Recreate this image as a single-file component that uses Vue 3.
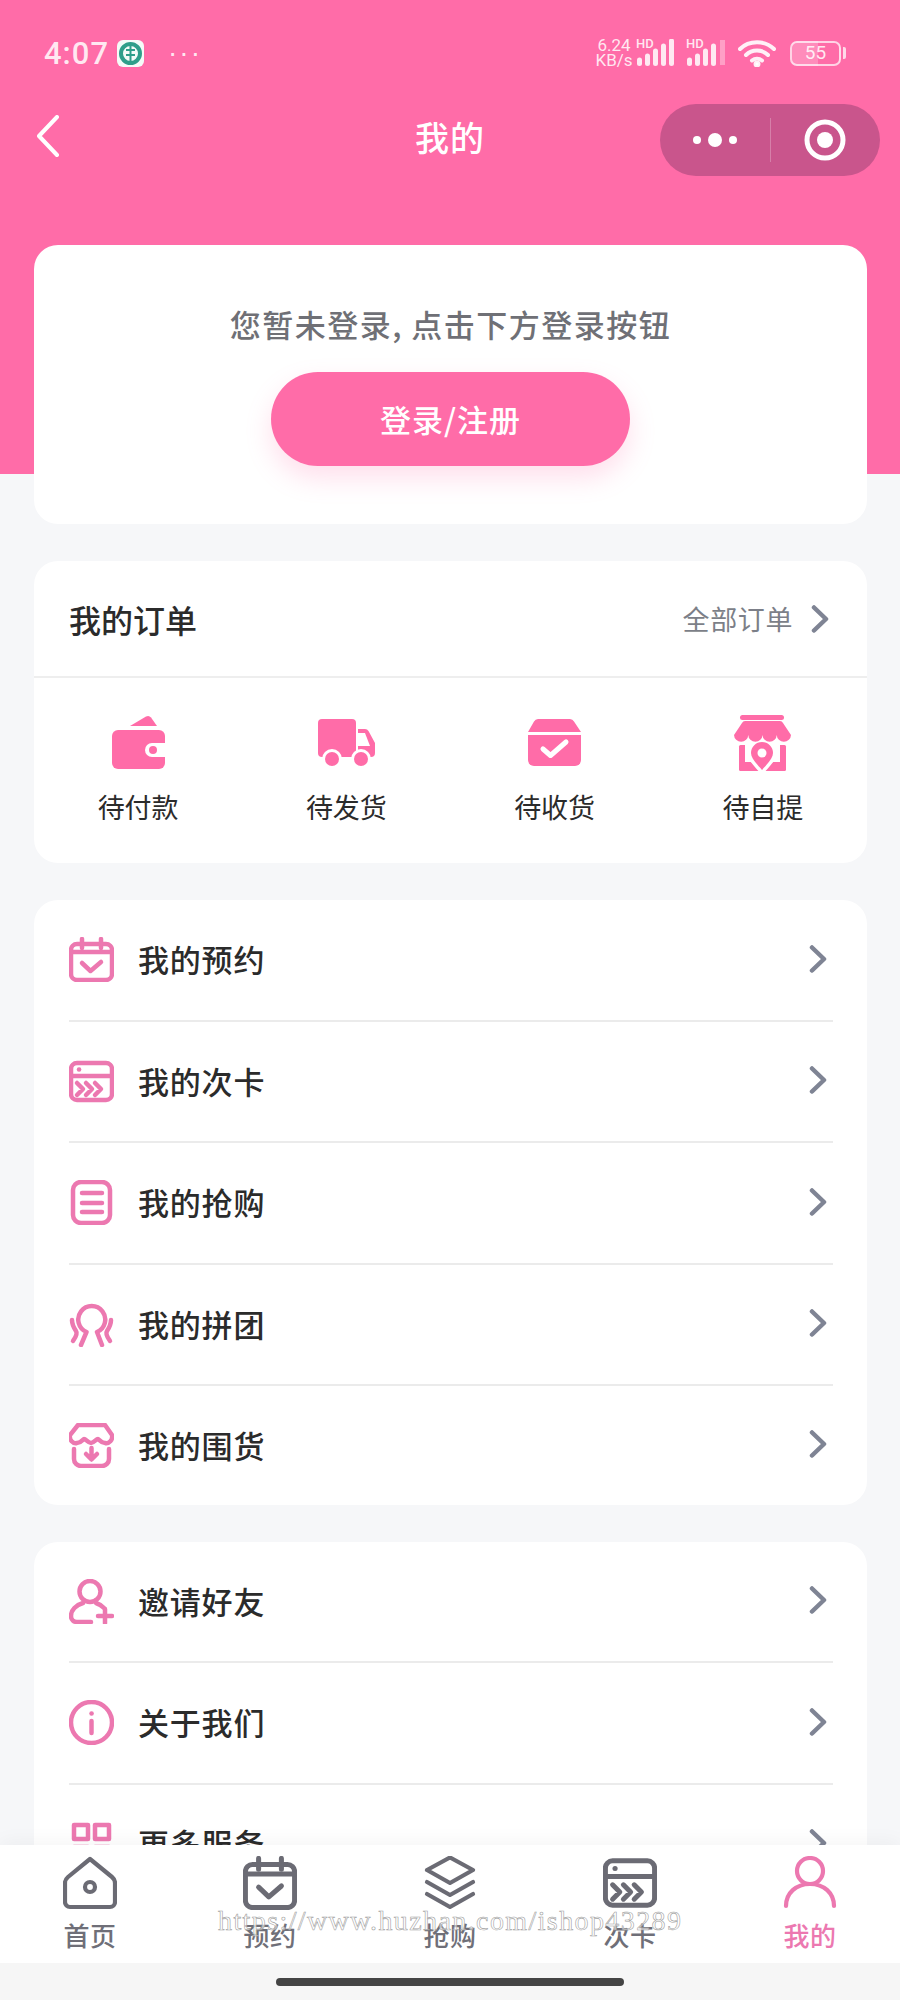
<template>
  <div class="page">
    <div class="scroll">
      <div class="status">
        <div class="status-left">
          <span class="time">4:07</span>
          <svg class="bank" width="27" height="27" viewBox="0 0 27 27">
            <rect width="27" height="27" rx="6" fill="#f4fbf8" />
            <circle cx="13.5" cy="13.5" r="9.5" fill="none" stroke="#2f9e8a" stroke-width="4" />
            <path d="M9 10h9M9 15h9M13.5 6v15" fill="none" stroke="#2f9e8a" stroke-width="2" />
          </svg>
          <span class="more-dots">···</span>
        </div>
        <div class="status-right">
          <span class="net">6.24<br />KB/s</span>
          <span class="signal">
            <span class="hd">HD</span>
            <svg width="39" height="27" viewBox="0 0 39 27">
              <path d="M2.500 21v3.500M10.500 17v7.500M18.500 12v12.500M26.500 7v17.500M34.500 2v22.500" stroke="#fff" stroke-opacity=".85" stroke-width="5" stroke-linecap="round" />
            </svg>
          </span>
          <span class="signal">
            <span class="hd">HD</span>
            <svg width="39" height="27" viewBox="0 0 39 27">
              <path d="M2.500 21v3.500M10.500 17v7.500M18.500 12v12.500M26.500 7v17.500" stroke="#fff" stroke-opacity=".85" stroke-width="5" stroke-linecap="round" />
              <path d="M35.500 1v25" stroke="#fff" stroke-opacity=".35" stroke-width="5" />
            </svg>
          </span>
          <svg class="wifi" width="38" height="28" viewBox="0 0 38 28" fill="none" stroke="#fff" stroke-opacity=".9" stroke-width="4" stroke-linecap="round">
            <path d="M2 10C11 1 27 1 36 10" />
            <path d="M8 16C14 10 24 10 30 16" />
            <path d="M14 21.500C17 19 21 19 24 21.500" />
            <circle cx="19" cy="25" r="1.500" fill="#fff" />
          </svg>
          <span class="battery"><span class="battery-body">55</span><span class="battery-tip"></span></span>
        </div>
      </div>

      <div class="nav">
        <svg class="back" width="24" height="42" viewBox="0 0 24 42" fill="none" stroke="#fff" stroke-width="4" stroke-linecap="round" stroke-linejoin="round">
          <path d="M21 2L3 21l18 19" />
        </svg>
        <div class="nav-title">我的</div>
        <div class="capsule">
          <div class="capsule-side">
            <svg width="46" height="16" viewBox="0 0 46 16" fill="#fff">
              <circle cx="5" cy="8" r="4" />
              <circle cx="23" cy="8" r="7" />
              <circle cx="41" cy="8" r="4" />
            </svg>
          </div>
          <div class="capsule-line"></div>
          <div class="capsule-side">
            <svg width="42" height="42" viewBox="0 0 42 42">
              <circle cx="21" cy="21" r="18" fill="none" stroke="#fff" stroke-width="5" />
              <circle cx="21" cy="21" r="8" fill="#fff" />
            </svg>
          </div>
        </div>
      </div>

      <div class="cards">
        <section class="card login">
          <p class="login-tip">您暂未登录, 点击下方登录按钮</p>
          <button class="login-btn">登录/注册</button>
        </section>

        <section class="card">
          <div class="order-head">
            <span class="order-title">我的订单</span>
            <span class="order-all">
              全部订单
              <svg class="arrow" width="18" height="28" viewBox="0 0 18 28"><path d="M3 2.500L15 14 3 25.500" /></svg>
            </span>
          </div>
          <div class="order-row">
            <div class="order-item">
              <svg class="order-icon" width="60" height="60" viewBox="0 0 60 60">
                <path d="M22 11L38 1.500Q41 0 43 2.500L49 11z" fill="#ff6ca8" />
                <path d="M10 15h41a6 6 0 0 1 6 6v27a6 6 0 0 1-6 6H10a6 6 0 0 1-6-6V21a6 6 0 0 1 6-6z" fill="#ff6ca8" />
                <path d="M58 28H44a7 7 0 0 0 0 14h14z" fill="#fff" />
                <circle cx="45" cy="35" r="4" fill="#ff6ca8" />
              </svg>
              <span>待付款</span>
            </div>
            <div class="order-item">
              <svg class="order-icon" width="60" height="60" viewBox="0 0 60 60">
                <path d="M6 4h30a4 4 0 0 1 4 4v34H6a4 4 0 0 1-4-4V8a4 4 0 0 1 4-4z" fill="#ff6ca8" />
                <path d="M42 14h7a4 4 0 0 1 3.500 2L59 28v10a4 4 0 0 1-4 4H42z" fill="#ff6ca8" />
                <path d="M41 18h8l5 13H41z" fill="#fff" />
                <circle cx="16" cy="44" r="10" fill="#fff" />
                <circle cx="45" cy="44" r="10" fill="#fff" />
                <circle cx="16" cy="44" r="7" fill="#ff6ca8" />
                <circle cx="45" cy="44" r="7" fill="#ff6ca8" />
              </svg>
              <span>待发货</span>
            </div>
            <div class="order-item">
              <svg class="order-icon" width="60" height="60" viewBox="0 0 60 60">
                <path d="M13 4h32a5 5 0 0 1 4 2.500L56 17H3L9 6.500A5 5 0 0 1 13 4z" fill="#ff6ca8" />
                <path d="M3 20h53v25a6 6 0 0 1-6 6H9a6 6 0 0 1-6-6z" fill="#ff6ca8" />
                <path d="M18 34l7.500 6.500L41 27" fill="none" stroke="#fff" stroke-width="5" stroke-linecap="round" stroke-linejoin="round" />
              </svg>
              <span>待收货</span>
            </div>
            <div class="order-item">
              <svg class="order-icon" width="60" height="60" viewBox="0 0 60 60">
                <rect x="7" y="0" width="44" height="5" rx="2.500" fill="#ff6ca8" />
                <rect x="6" y="30" width="47" height="26" rx="1.500" fill="#ff6ca8" />
                <rect x="12" y="29" width="35" height="18" fill="#fff" />
                <path d="M29 26a14 14 0 0 1 14 14c0 6-9 14-14 20-5-6-14-14-14-20a14 14 0 0 1 14-14z" fill="#fff" />
                <path d="M29 27a11 11 0 0 1 11 11c0 6-7 12-11 17-4-5-11-11-11-17a11 11 0 0 1 11-11z" fill="#ff6ca8" />
                <circle cx="29" cy="38" r="4.500" fill="#fff" />
                <path d="M12 6h35a4 4 0 0 1 3 2l8 12a7.130 7.130 0 0 1-14.250 0a7.130 7.130 0 0 1-14.250 0a7.130 7.130 0 0 1-14.250 0a7.130 7.130 0 0 1-14.250 0L9 8a4 4 0 0 1 3-2z" fill="#ff6ca8" />
              </svg>
              <span>待自提</span>
            </div>
          </div>
        </section>

        <section v-for="(group, i) in groups" :key="i" class="card list">
          <div v-for="row in group" :key="row.label" class="list-row">
            <svg class="list-icon" width="45" height="45" viewBox="0 0 45 45">
              <path v-for="d in row.paths" :key="d" :d="d" />
            </svg>
            <span class="list-label">{{ row.label }}</span>
            <svg class="arrow" width="18" height="28" viewBox="0 0 18 28"><path d="M3 2.500L15 14 3 25.500" /></svg>
          </div>
        </section>
      </div>
    </div>

    <nav class="tabbar">
      <div v-for="tab in tabs" :key="tab.label" class="tab" :class="{ active: tab.active }">
        <svg class="tab-icon" width="54" height="54" :viewBox="tab.box">
          <path v-for="d in tab.paths" :key="d" :d="d" />
        </svg>
        <span>{{ tab.label }}</span>
      </div>
    </nav>
    <div class="home-area"><div class="home-bar"></div></div>

    <div class="watermark">https://www.huzhan.com/ishop43289</div>
  </div>
</template>

<script setup>
const calendar = [
  "M8 7h29a6 6 0 0 1 6 6v24a6 6 0 0 1-6 6H8a6 6 0 0 1-6-6V13a6 6 0 0 1 6-6z",
  "M2 15h41",
  "M13 2v9M32 2v9",
  "M13 26l8.500 8L32 25",
];
const timesCard = [
  "M8 4h29a6 6 0 0 1 6 6v25a6 6 0 0 1-6 6H8a6 6 0 0 1-6-6V10a6 6 0 0 1 6-6z",
  "M2 17h41",
  "M10 10.500h.1",
  "M8 24l6 6-6 6M17 24l6 6-6 6M26 24l6 6-6 6",
];

const groups = [
  [
    { label: "我的预约", paths: calendar },
    { label: "我的次卡", paths: timesCard },
    {
      label: "我的抢购",
      paths: [
        "M12 2h21a8 8 0 0 1 8 8v25a8 8 0 0 1-8 8H12a8 8 0 0 1-8-8V10a8 8 0 0 1 8-8z",
        "M13 13h20M13 23h20M13 32h20",
      ],
    },
    {
      label: "我的拼团",
      paths: [
        "M12 43l5.500-13A13.500 13.500 0 1 1 28 30l5 13",
        "M3 18c0 5 2 8 4 11s-1 7-3 10",
        "M42 18c0 5-2 8-4 11s1 7 3 10",
      ],
    },
    {
      label: "我的围货",
      paths: [
        "M9 2h27l7 10c1 5-3 9-7 8-4 0-6-4-7-4-2 0-4 4-7 4s-5-4-7-4c-1 0-3 4-7 4-4 1-8-3-7-8z",
        "M5 26v10a7 7 0 0 0 7 7h21a7 7 0 0 0 7-7V26",
        "M22.500 25v11M17 31l5.500 5.500L28 31",
      ],
    },
  ],
  [
    {
      label: "邀请好友",
      paths: [
        "M21 2a10.500 10.500 0 1 0 0 21a10.500 10.500 0 1 0 0-21z",
        "M14 24C7 26 2 31 2 37c0 4 3 6 6 6h14",
        "M27 24c3 1 6 3 8 5",
        "M36 30v14M29 37h14",
      ],
    },
    {
      label: "关于我们",
      paths: [
        "M22.500 2a20.500 20.500 0 1 0 0 41a20.500 20.500 0 1 0 0-41z",
        "M22.500 13.500h.1",
        "M22.500 21v12",
      ],
    },
    {
      label: "更多服务",
      paths: [
        "M5 4h14v14H5zM26 4h14v14H26z",
        "M5 26h14v14H5zM26 26h14v14H26z",
      ],
    },
  ],
];

const tabs = [
  {
    label: "首页",
    box: "0 0 54 54",
    paths: [
      "M27 3L49 21q3 2.500 3 6v19a5 5 0 0 1-5 5H7a5 5 0 0 1-5-5V27q0-3.500 3-6z",
      "M27 26a5 5 0 1 0 0 10a5 5 0 1 0 0-10z",
    ],
  },
  { label: "预约", box: "0 0 45 45", paths: calendar },
  {
    label: "抢购",
    box: "0 0 54 54",
    paths: [
      "M27 1.500L50 14 27 27 4 14z",
      "M50 26L27 39 4 26",
      "M50 38L27 51 4 38",
    ],
  },
  { label: "次卡", box: "0 0 45 45", paths: timesCard },
  {
    label: "我的",
    box: "0 0 54 54",
    active: true,
    paths: [
      "M27 2a13 13 0 1 0 0 26a13 13 0 1 0 0-26z",
      "M3 50C3 37 13 28 27 28s24 9 24 22",
    ],
  },
];
</script>

<style scoped>
.page {
  position: relative;
  width: 900px;
  height: 2000px;
  display: flex;
  flex-direction: column;
  overflow: hidden;
  font-family: "Noto Sans CJK SC", "Noto Sans", sans-serif;
  color: #2b2b2b;
}

.scroll {
  flex: 1;
  min-height: 0;
  overflow: hidden;
  background: linear-gradient(#ff6ca8 474px, #f6f7f9 474px);
}

.status {
  height: 104px;
  padding: 38px 54px 0 44px;
  box-sizing: border-box;
  display: flex;
  justify-content: space-between;
  align-items: flex-start;
  color: rgba(255, 255, 255, 0.85);
}

.status-left {
  display: flex;
  align-items: center;
  gap: 8px;
  height: 30px;
}

.time {
  font-family: Roboto, sans-serif;
  font-size: 31px;
  letter-spacing: 1px;
  font-weight: 500;
  width: 65px;
}

.more-dots {
  margin-left: 16px;
  font-family: "Liberation Sans", sans-serif;
  font-size: 28px;
  letter-spacing: 2px;
}

.status-right {
  display: flex;
  align-items: center;
  height: 30px;
}

.net {
  width: 44px;
  font-family: Roboto, sans-serif;
  font-size: 17px;
  line-height: 15px;
  text-align: center;
}

.signal {
  position: relative;
  width: 50px;
  height: 28px;
  display: flex;
  justify-content: flex-end;
  padding-right: 10px;
  box-sizing: border-box;
}

.hd {
  position: absolute;
  left: 0;
  top: -1px;
  font-family: Roboto, sans-serif;
  font-size: 13px;
  line-height: 12px;
  font-weight: 500;
}

.wifi {
  margin-left: 2px;
}

.battery {
  display: flex;
  align-items: center;
  margin-left: 14px;
}

.battery-body {
  width: 51px;
  height: 25px;
  box-sizing: border-box;
  border: 2.500px solid rgba(255, 255, 255, 0.7);
  border-radius: 7px;
  background: linear-gradient(90deg, rgba(255, 255, 255, 0.22) 55%, transparent 55%);
  font-family: Roboto, sans-serif;
  font-size: 19px;
  line-height: 20px;
  text-align: center;
}

.battery-tip {
  width: 3px;
  height: 12px;
  margin-left: 2px;
  border-radius: 0 2px 2px 0;
  background: rgba(255, 255, 255, 0.75);
}

.nav {
  height: 72px;
  padding: 0 20px;
  display: grid;
  grid-template-columns: 1fr auto 1fr;
  align-items: center;
}

.back {
  margin: -8px 0 0 16px;
}

.nav-title {
  color: #fff;
  font-size: 34px;
  letter-spacing: 1px;
  font-weight: 500;
  margin-top: -8px;
}

.capsule {
  justify-self: end;
  width: 220px;
  height: 72px;
  border-radius: 36px;
  background: #c9558c;
  display: flex;
  align-items: center;
}

.capsule-side {
  flex: 1;
  display: flex;
  justify-content: center;
  align-items: center;
}

.capsule-line {
  width: 1px;
  height: 44px;
  background: rgba(255, 255, 255, 0.25);
}

.cards {
  margin-top: 69px;
  padding: 0 33px 0 34px;
  display: flex;
  flex-direction: column;
  gap: 37px;
}

.card {
  background: #fff;
  border-radius: 24px;
}

.login {
  height: 279px;
  padding-top: 57px;
  box-sizing: border-box;
  display: flex;
  flex-direction: column;
  align-items: center;
}

.login-tip {
  margin: 0;
  font-size: 31px;
  line-height: 44px;
  letter-spacing: 1.500px;
  font-weight: 500;
  color: #6f7076;
}

.login-btn {
  margin-top: 26px;
  width: 359px;
  height: 94px;
  border: 0;
  border-radius: 47px;
  background: #ff6ca8;
  color: #fff;
  font-family: inherit;
  font-size: 31px;
  font-weight: 500;
  letter-spacing: 1px;
  padding-bottom: 3px;
  box-shadow: 0 12px 26px rgba(255, 108, 168, 0.22);
}

.order-head {
  height: 115px;
  padding: 0 38px 0 35px;
  display: flex;
  justify-content: space-between;
  align-items: center;
  border-bottom: 2px solid #eeeeee;
}

.order-title {
  font-size: 32px;
  font-weight: 500;
}

.order-all {
  display: flex;
  align-items: center;
  gap: 18px;
  font-size: 27px;
  letter-spacing: 0.600px;
  color: #7c7f88;
}

.arrow {
  flex: none;
  fill: none;
  stroke: #7f8494;
  stroke-width: 4.500;
  stroke-linecap: round;
  stroke-linejoin: round;
}

.order-row {
  height: 185px;
  padding-top: 37px;
  box-sizing: border-box;
  display: grid;
  grid-template-columns: repeat(4, 1fr);
}

.order-item {
  display: flex;
  flex-direction: column;
  align-items: center;
  font-size: 27px;
  line-height: 38px;
}

.order-icon {
  margin-bottom: 13px;
}

.list {
  padding: 0 34px 0 35px;
}

.list-row {
  height: 121.500px;
  display: flex;
  align-items: center;
  box-sizing: border-box;
  border-bottom: 2px solid #ebebeb;
}

.list-row:last-child {
  border-bottom: 0;
  height: 118.500px;
}

.list-icon {
  flex: none;
  fill: none;
  stroke: #ec78b0;
  stroke-width: 4.500;
  stroke-linecap: round;
  stroke-linejoin: round;
}

.list-label {
  flex: 1;
  margin: 0 0 2px 24px;
  font-size: 31px;
  letter-spacing: 0.800px;
  font-weight: 500;
}

.list .arrow {
  margin: 0 6px 2px 0;
}

.tabbar {
  flex: none;
  height: 118px;
  padding-top: 11px;
  box-sizing: border-box;
  background: #fff;
  display: grid;
  grid-template-columns: repeat(5, 180px);
  box-shadow: 0 -4px 18px rgba(0, 0, 0, 0.04);
}

.tab {
  display: flex;
  flex-direction: column;
  align-items: center;
  font-size: 26px;
  letter-spacing: 0.500px;
  line-height: 36px;
  font-weight: 500;
  color: #6f6f78;
}

.tab.active {
  color: #ec78b0;
}

.tab-icon {
  margin-bottom: 7px;
  fill: none;
  stroke: #6b6b74;
  stroke-width: 4.200;
  stroke-linecap: round;
  stroke-linejoin: round;
}

.tab.active .tab-icon {
  stroke: #ec78b0;
}

.home-area {
  flex: none;
  height: 37px;
  background: #f6f6f6;
  display: flex;
  justify-content: center;
  padding-top: 15px;
  box-sizing: border-box;
}

.home-bar {
  width: 348px;
  height: 8px;
  border-radius: 4px;
  background: #444;
}

.watermark {
  position: absolute;
  left: 218px;
  top: 1904px;
  font-family: "Liberation Serif", serif;
  font-size: 28px;
  line-height: 34px;
  letter-spacing: 1.400px;
  white-space: nowrap;
  color: rgba(255, 255, 255, 0.6);
  -webkit-text-stroke: 0.600px #9f9f9f;
}
</style>
